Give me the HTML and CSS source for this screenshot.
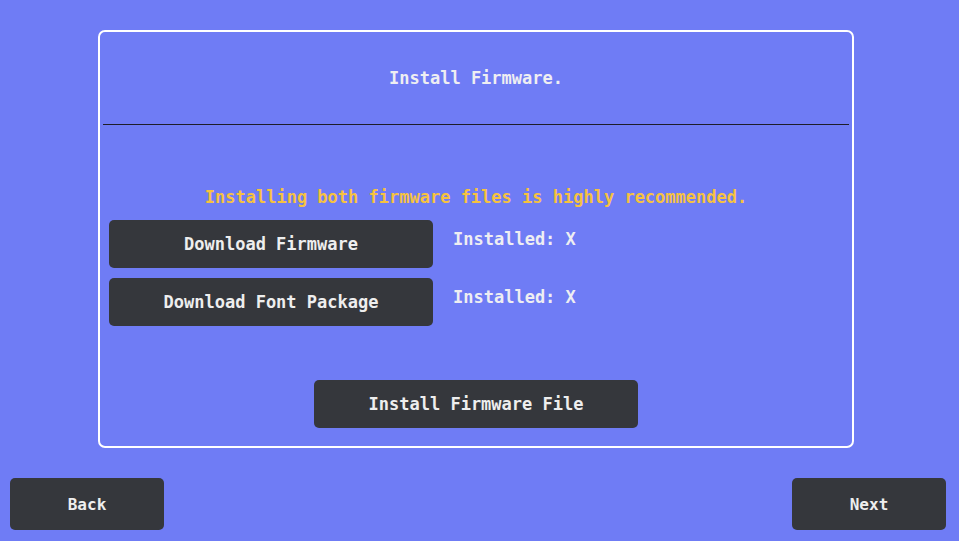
FILE: index.html
```html
<!DOCTYPE html>
<html lang="en">
<head>
    <meta charset="UTF-8">
    <meta name="viewport" content="width=device-width, initial-scale=1.0">
    <title>Install Firmware</title>
    <link rel="stylesheet" href="styles.css">
</head>
<body>

    <div class="panel">
        <div class="panel-header">
            <h1>Install Firmware.</h1>
        </div>

        <div class="panel-body">
            <p class="warning">Installing both firmware files is highly recommended.</p>

            <div class="download-row">
                <button class="btn btn-wide">Download Firmware</button>
                <span class="status">Installed: X</span>
            </div>
            <div class="download-row">
                <button class="btn btn-wide">Download Font Package</button>
                <span class="status">Installed: X</span>
            </div>

            <div class="install-row">
                <button class="btn btn-wide">Install Firmware File</button>
            </div>
        </div>
    </div>

    <div class="nav">
        <button class="btn btn-nav">Back</button>
        <button class="btn btn-nav">Next</button>
    </div>

</body>
</html>
```

FILE: styles.css
```css
* {
    box-sizing: border-box;
}

body {
    background-color: #6F7CF5;
    color: #EEEEF2;
    font-family: 'DejaVu Sans Mono', 'Liberation Mono', monospace;
    font-weight: bold;
    font-size: 17px;
    margin: 0;
    padding: 0;
    width: 959px;
    height: 541px;
    overflow: hidden;
}

.panel {
    width: 756px;
    height: 418px;
    margin: 30px 0 0 98px;
    border: 2px solid #FFFFFF;
    border-radius: 7px;
    display: flex;
    flex-direction: column;
}

.panel-header {
    height: 93px;
    margin: 0 3px;
    border-bottom: 1px solid #1E1E28;
    display: flex;
    align-items: center;
    justify-content: center;
}

h1 {
    margin: 0;
    font-size: 17px;
    font-weight: bold;
    line-height: 20px;
}

.panel-body {
    flex: 1;
    padding: 62px 9px 18px;
    display: flex;
    flex-direction: column;
}

.warning {
    margin: 0 0 13px;
    color: #F6C240;
    text-align: center;
    line-height: 20px;
}

.download-row {
    display: flex;
    gap: 20px;
    margin-bottom: 10px;
}

.status {
    margin-top: 9px;
    line-height: 20px;
}

.btn {
    background-color: #35373C;
    color: #EEEEEE;
    font-family: inherit;
    font-weight: bold;
    font-size: 17px;
    border: none;
    border-radius: 5px;
    padding: 0;
    cursor: pointer;
}

.btn-wide {
    width: 324px;
    height: 48px;
}

.install-row {
    margin-top: auto;
    display: flex;
    justify-content: center;
}

.nav {
    display: flex;
    justify-content: space-between;
    margin-top: 30px;
    padding: 0 13px 0 10px;
}

.btn-nav {
    width: 154px;
    height: 52px;
    font-size: 16px;
}
```
